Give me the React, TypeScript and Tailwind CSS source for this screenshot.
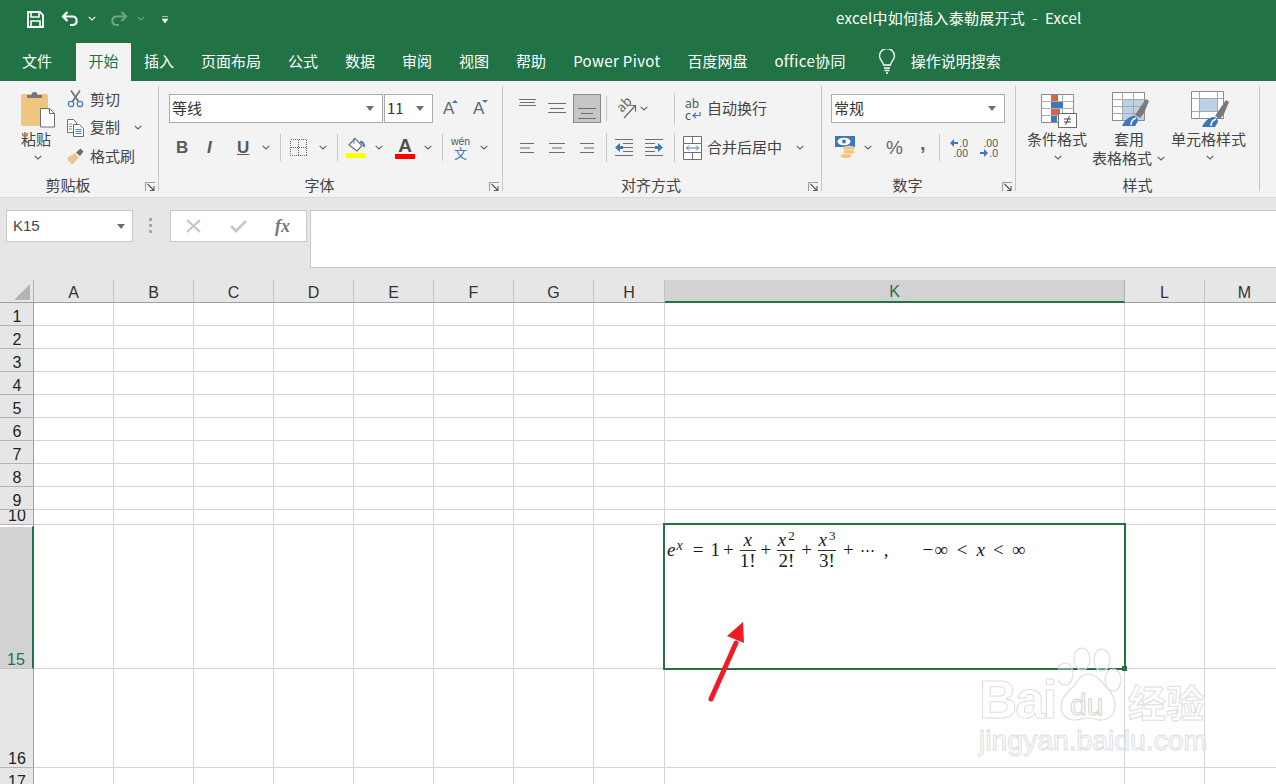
import React from "react";

const columns = [
  { name: "A", width: 80 },
  { name: "B", width: 80 },
  { name: "C", width: 80 },
  { name: "D", width: 80 },
  { name: "E", width: 80 },
  { name: "F", width: 80 },
  { name: "G", width: 80 },
  { name: "H", width: 71 },
  { name: "K", width: 460 },
  { name: "L", width: 80 },
  { name: "M", width: 80 },
];

const rows = [
  { name: "1", height: 23 },
  { name: "2", height: 23 },
  { name: "3", height: 23 },
  { name: "4", height: 23 },
  { name: "5", height: 23 },
  { name: "6", height: 23 },
  { name: "7", height: 23 },
  { name: "8", height: 23 },
  { name: "9", height: 23 },
  { name: "10", height: 15 },
  { name: "15", height: 144 },
  { name: "16", height: 99 },
  { name: "17", height: 23 },
];

const tabs = ["插入", "页面布局", "公式", "数据", "审阅", "视图", "帮助", "Power Pivot", "百度网盘", "office协同"];

function Chev({ className = "" }: { className?: string }) {
  return (
    <svg width="8" height="5" viewBox="0 0 8 5" className={`shrink-0 ${className}`}>
      <path d="M.7.8 4 4 7.3.8" fill="none" stroke="#606060" strokeWidth="1.1" />
    </svg>
  );
}

function Caret({ className = "" }: { className?: string }) {
  return (
    <svg width="8" height="5" viewBox="0 0 8 5" className={`shrink-0 ${className}`}>
      <path d="M0 0h8L4 5z" fill="#6e6e6e" />
    </svg>
  );
}

function Sep({ className = "" }: { className?: string }) {
  return <div className={`w-px shrink-0 self-stretch bg-[#c8c8c8] ${className}`} />;
}

function Launcher() {
  return (
    <svg width="10" height="9" viewBox="0 0 10 9" className="absolute right-[3px] bottom-[0px]">
      <path d="M.5 9V.5H10" fill="none" stroke="#9a9a9a" />
      <path d="M2.500 2l6 6M9 4v4.500H5" fill="none" stroke="#555" strokeWidth="1.1" />
    </svg>
  );
}

function Group({ width, label, children, launcher = true }: { width: string; label: string; children: React.ReactNode; launcher?: boolean }) {
  return (
    <section className={`${width} flex h-[105px] shrink-0 flex-col border-r border-[#c6c6c6]`}>
      <div className="h-[92px]">{children}</div>
      <div className={`relative h-[13px] text-center text-[15px] leading-[14px] text-[#444] ${launcher ? "pr-[22px]" : ""}`}>
        {label}
        {launcher && <Launcher />}
      </div>
    </section>
  );
}

function Select({ width, label }: { width: string; label: string }) {
  return (
    <div className={`${width} flex h-[29px] shrink-0 items-center justify-between border border-[#ababab] bg-white pl-[2px] pr-[8px] text-[15px] text-[#333]`}>
      <span>{label}</span>
      <Caret />
    </div>
  );
}

// each line is [x1, x2, y]
function Lines({ width, lines }: { width: number; lines: [number, number, number][] }) {
  return (
    <svg width={width} height="16" viewBox={`0 0 ${width} 16`} className="shrink-0">
      {lines.map(([x1, x2, y], i) => (
        <path key={i} d={`M${x1} ${y}H${x2}`} stroke="#6e6e6e" />
      ))}
    </svg>
  );
}

function PasteIcon() {
  return (
    <svg width="35" height="38" viewBox="0 0 35 38">
      <rect x="0" y="4" width="27" height="32" rx="2" fill="#efc67f" />
      <path d="M6 8V5h4.500a3 3 0 0 1 6 0H21v3z" fill="#777" />
      <path d="M19.500 18.500h9l5 5v13.500h-14z" fill="#fff" stroke="#6e6e6e" />
      <path d="M28.500 18.500v5h5" fill="none" stroke="#6e6e6e" />
    </svg>
  );
}

function ScissorsIcon() {
  return (
    <svg width="17" height="18" viewBox="0 0 17 18" className="shrink-0">
      <path d="M5.500 11.500 13 .5M11.500 11.500 4 .5" stroke="#6a6a6a" strokeWidth="1.500" fill="none" />
      <circle cx="4" cy="14" r="2.700" fill="none" stroke="#4a7ebb" strokeWidth="1.300" />
      <circle cx="13" cy="14" r="2.700" fill="none" stroke="#4a7ebb" strokeWidth="1.300" />
    </svg>
  );
}

function CopyIcon() {
  return (
    <svg width="17" height="18" viewBox="0 0 17 18" className="shrink-0">
      <path d="M.5.500h6l3 3v10h-9z" fill="#fff" stroke="#6e6e6e" />
      <path d="M6.500 5.500h6l4 4v8h-10z" fill="#fff" stroke="#6e6e6e" />
      <path d="M2 5h3M2 7.500h3M2 10h3" stroke="#888" />
      <path d="M8.500 10.500h6M8.500 12.500h6M8.500 14.500h6" stroke="#4a7ebb" />
    </svg>
  );
}

function BrushIcon() {
  return (
    <svg width="17" height="16" viewBox="0 0 17 16" className="shrink-0">
      <path d="M0 10 8 5l4 4.500L6 16H3l1-3-2 1z" fill="#e9c78c" />
      <path d="M9 4.500l4.500-4 3 3-3.500 4.500z" fill="#6e6e6e" />
    </svg>
  );
}

function BorderIcon() {
  return (
    <svg width="17" height="17" viewBox="0 0 17 17" className="shrink-0" shapeRendering="crispEdges">
      <path d="M.5.500h16v16H.5zM8.500.5v16M.5 8.500h16" fill="none" stroke="#666" strokeDasharray="1 1" />
    </svg>
  );
}

function FillIcon() {
  return (
    <div className="flex w-[20px] shrink-0 flex-col items-center">
      <svg width="20" height="16" viewBox="0 0 20 16">
        <path d="M3 8 9 1.500l7 7-5 5.500z" fill="#fff" stroke="#6e6e6e" strokeWidth="1.200" />
        <path d="M8 1v6" stroke="#6e6e6e" />
        <path d="M14.500 3.500c3 .5 4.500 3 4.500 5.500 0 1.500-2 1.500-2 0 0-2-1-3-3-3z" fill="#3f78b8" />
      </svg>
      <div className="h-[5px] w-[20px] bg-[#ffff00]" />
    </div>
  );
}

function OrientationIcon() {
  return (
    <div className="relative h-[24px] w-[22px] shrink-0">
      <span className="absolute left-[1px] top-[-1px] rotate-[-45deg] text-[13px] leading-[16px] text-[#666]">ab</span>
      <svg width="22" height="24" viewBox="0 0 22 24" className="absolute left-0 top-0">
        <path d="M9 21 20 9M14.500 8.500H20.500V14.500" fill="none" stroke="#666" strokeWidth="1.200" />
      </svg>
    </div>
  );
}

function WrapIcon() {
  return (
    <div className="relative h-[24px] w-[15px] shrink-0 text-[12px] leading-[12px] text-[#555]">
      <div>ab</div>
      <div>c</div>
      <svg width="9" height="9" viewBox="0 0 9 9" className="absolute bottom-[1px] right-[-1px]">
        <path d="M8 1v3.500H1.500M4 2 1 4.500 4 7" fill="none" stroke="#3f78b8" strokeWidth="1.200" />
      </svg>
    </div>
  );
}

function IndentIcon({ flip }: { flip?: boolean }) {
  return (
    <svg width="18" height="17" viewBox="0 0 18 17" className={`shrink-0 ${flip ? "-scale-x-100" : ""}`}>
      <path d="M0 .5h18M8 4.500h10M8 8.500h10M8 12.500h10M0 16.500h18" stroke="#6e6e6e" />
      <path d="M0 8.500 5 4v3h3v3H5v3z" fill="#3f78b8" />
    </svg>
  );
}

function MergeIcon() {
  return (
    <svg width="19" height="24" viewBox="0 0 19 24" className="shrink-0">
      <path d="M.5.500h18v23H.5zM.5 7.500h18M.5 16.500h18M9.500.5v7M9.500 16.500v7" fill="#fff" stroke="#6e6e6e" />
      <path d="M3.500 12h12M6 9.500 3.500 12 6 14.500M13 9.500l2.500 2.500-2.500 2.500" fill="none" stroke="#3f78b8" />
    </svg>
  );
}

function CurrencyIcon() {
  return (
    <svg width="20" height="24" viewBox="0 0 20 24" className="shrink-0">
      <rect x="0" y="0" width="20" height="11" fill="#3f78b8" />
      <ellipse cx="9" cy="5.500" rx="6.500" ry="3.800" fill="#fff" />
      <circle cx="9" cy="5.500" r="2" fill="#3f78b8" />
      <ellipse cx="14" cy="12.500" rx="6" ry="2.400" fill="#efc67f" stroke="#fff" strokeWidth=".5" />
      <ellipse cx="14" cy="16" rx="6" ry="2.400" fill="#efc67f" stroke="#fff" strokeWidth=".5" />
      <ellipse cx="11" cy="20" rx="6" ry="2.400" fill="#efc67f" stroke="#fff" strokeWidth=".5" />
    </svg>
  );
}

function DecimalIcon({ more }: { more?: boolean }) {
  const arrow = (
    <svg width="8" height="8" viewBox="0 0 8 8" className={more ? "" : "-scale-x-100"}>
      <path d="M0 3h4V0l4 4-4 4V5H0z" fill="#3f78b8" />
    </svg>
  );
  return (
    <div className="flex w-[18px] shrink-0 flex-col items-end font-['Liberation_Sans',sans-serif] text-[10.500px] leading-[10px] text-[#555]">
      {more ? (
        <>
          <span>.00</span>
          <span className="flex items-center gap-[1px]">{arrow}.0</span>
        </>
      ) : (
        <>
          <span className="flex items-center gap-[1px]">{arrow}.0</span>
          <span>.00</span>
        </>
      )}
    </div>
  );
}

function CondFormatIcon() {
  return (
    <svg width="38" height="36" viewBox="0 0 38 36" className="mt-[4px]">
      <path d="M1.500.5h32v28h-32z" fill="#fff" stroke="#8a8a8a" />
      <path d="M1.500 7.500h32M1.500 14.500h32M1.500 21.500h32M11.500.5v28M22.500.5v28" stroke="#b0b0b0" />
      <rect x="11" y="1" width="7" height="6" fill="#d9624a" />
      <rect x="11" y="8" width="12" height="6" fill="#3f78b8" />
      <rect x="11" y="15" width="9" height="6" fill="#d9624a" />
      <rect x="11" y="22" width="6" height="6" fill="#3f78b8" />
      <rect x="18.500" y="19.500" width="18" height="14" fill="#fff" stroke="#6e6e6e" />
      <path d="M24 25h7M24 28h7M29.500 22l-4 9" stroke="#444" fill="none" />
    </svg>
  );
}

function TableIcon() {
  return (
    <svg width="38" height="36" viewBox="0 0 38 36" className="mt-[1px]">
      <path d="M.5 1.500h32v28H.5z" fill="#fff" stroke="#8a8a8a" />
      <rect x="10" y="8" width="22" height="21" fill="#bdd0e6" />
      <path d="M.5 8.500h32M.5 15.500h32M.5 22.500h32M10.500 1.500v28M21.500 1.500v28" stroke="#a8a8a8" />
      <path d="M23 24 27 18 34 8l3 2-5 12-4 5z" fill="#7a7a7a" />
      <path d="M10 35c2-5 6-9 11-10 3 0 5 2 5 5l-3 5z" fill="#3f78b8" />
      <path d="M19 34c0-3 2-6 5-7" fill="none" stroke="#fff" strokeWidth="1.500" />
    </svg>
  );
}

function CellStyleIcon() {
  return (
    <svg width="38" height="38" viewBox="0 0 38 38">
      <path d="M.5 1.500h32v27H.5z" fill="#fff" stroke="#8a8a8a" />
      <rect x="8" y="8" width="18" height="13" fill="#bdd0e6" />
      <path d="M.5 8.500h32M.5 21.500h32M8.500 1.500v27M26.500 1.500v27" stroke="#a8a8a8" />
      <path d="M24 26 28 20 35 10l3 2-5 12-4 5z" fill="#7a7a7a" />
      <path d="M11 37c2-5 6-9 11-10 3 0 5 2 5 5l-3 5z" fill="#3f78b8" />
      <path d="M20 36c0-3 2-6 5-7" fill="none" stroke="#fff" strokeWidth="1.500" />
    </svg>
  );
}

function Frac({ top, bottom, className }: { top: React.ReactNode; bottom: string; className: string }) {
  return (
    <div className={`flex shrink-0 flex-col items-center ${className}`}>
      <div className="h-[20px] whitespace-nowrap">{top}</div>
      <div className="h-[20px] w-full border-t border-[#333] text-center">{bottom}</div>
    </div>
  );
}

function Formula() {
  return (
    <div className="mt-[5px] flex h-[40px] items-center pl-[2px] font-['Liberation_Serif','DejaVu_Serif',serif] text-[19px] leading-[20px] text-[#1a1a1a]">
      <i>e</i>
      <i className="ml-[1px] mb-[8px] text-[14px]">x</i>
      <span className="ml-[10px]">=</span>
      <span className="ml-[7px]">1</span>
      <span className="ml-[3px]">+</span>
      <Frac top={<i>x</i>} bottom="1!" className="ml-[6px] w-[16px]" />
      <span className="ml-[5px]">+</span>
      <Frac top={<><i>x</i><sup className="ml-[2px] text-[13px] leading-[0]">2</sup></>} bottom="2!" className="ml-[6px] w-[18px]" />
      <span className="ml-[6px]">+</span>
      <Frac top={<><i>x</i><sup className="ml-[2px] text-[13px] leading-[0]">3</sup></>} bottom="3!" className="ml-[6px] w-[18px]" />
      <span className="ml-[7px]">+</span>
      <span className="ml-[6px] text-[15px]">⋯</span>
      <span className="ml-[9px]">,</span>
      <span className="ml-[34px]">−</span>
      <span className="ml-[1px]">∞</span>
      <span className="ml-[9px]">&lt;</span>
      <i className="ml-[9px]">x</i>
      <span className="ml-[8px]">&lt;</span>
      <span className="ml-[8px]">∞</span>
    </div>
  );
}

function Watermark() {
  const outline = "text-white/50 [-webkit-text-stroke:1px_#dedede]";
  return (
    <div className="pointer-events-none absolute left-[979px] top-[365px] w-[232px] font-['Liberation_Sans',sans-serif]">
      <div className="flex h-[78px] items-end">
        <span className={`w-[79px] text-[53px] font-bold leading-[46px] tracking-[-2px] ${outline}`}>Bai</span>
        <div className="relative h-[78px] w-[64px] shrink-0">
          <svg width="64" height="78" viewBox="0 0 64 78" className="absolute left-0 top-0">
            <g fill="#ffffff" fillOpacity=".35" stroke="#dedede" strokeWidth="1.200">
              <ellipse cx="7" cy="29" rx="8" ry="11" />
              <ellipse cx="24" cy="14" rx="8" ry="11" />
              <ellipse cx="44" cy="15" rx="8" ry="11" />
              <ellipse cx="55" cy="35" rx="8" ry="11" />
              <path d="M30 29c8 0 12 6 17 12 6 6 11 12 10 21-1 10-9 14-16 13-5-1-8-2-12-2s-7 2-12 2c-8 0-14-5-14-13 0-8 5-14 11-19 5-5 8-14 16-14z" />
            </g>
          </svg>
          <span className="absolute left-[12px] top-[45px] text-[30px] leading-[30px] text-white/50 [-webkit-text-stroke:1px_#d2d2d2]">du</span>
        </div>
        <span className={`ml-[6px] whitespace-nowrap font-['Noto_Sans_CJK_SC',sans-serif] text-[38px] font-bold leading-[44px] ${outline}`}>经验</span>
      </div>
      <div className={`text-[28.300px] leading-[34px] ${outline}`}>jingyan.baidu.com</div>
    </div>
  );
}

function Sheet() {
  return (
    <div className="relative flex-1 overflow-hidden bg-white font-['Liberation_Sans',sans-serif] text-[16px] text-[#333]">
      <div className="flex h-[23px] border-b border-[#a0a0a0] bg-[#e6e6e6]">
        <div className="flex w-[34px] shrink-0 items-end justify-end border-r border-[#b0b0b0] pb-[2px] pr-[3px]">
          <svg width="16" height="16" viewBox="0 0 16 16">
            <path d="M16 0v16H0z" fill="#b4b4b4" />
          </svg>
        </div>
        {columns.map((col) => (
          <div
            key={col.name}
            style={{ width: col.width }}
            className={`flex shrink-0 items-center justify-center border-r pt-[3px] ${
              col.name === "K"
                ? "-mb-px border-b-2 border-b-[#217346] border-r-[#b0b0b0] bg-[#d2d2d2] text-[#217346]"
                : "border-[#c4c4c4]"
            }`}
          >
            {col.name}
          </div>
        ))}
      </div>
      {rows.map((row) => (
        <div key={row.name} className="flex" style={{ height: row.height }}>
          <div
            className={`flex w-[34px] shrink-0 items-end justify-center overflow-hidden border-b leading-[16px] ${
              row.name === "15"
                ? "border-b-[#c4c4c4] border-r-2 border-r-[#217346] border-t-2 border-t-white bg-[#d2d2d2] text-[#217346]"
                : "border-r border-r-[#a0a0a0] border-b-[#b4b4b4] bg-[#e6e6e6] pl-[1px] text-[#222]"
            }`}
          >
            {row.name}
          </div>
          {columns.map((col) => (
            <div key={col.name} style={{ width: col.width }} className="shrink-0 border-b border-r border-[#d4d4d4]">
              {row.name === "15" && col.name === "K" && <Formula />}
            </div>
          ))}
        </div>
      ))}

      {/* selected cell */}
      <div className="absolute left-[663px] top-[243px] h-[147px] w-[463px] border-2 border-[#217346]" />
      <div className="absolute left-[1122px] top-[386px] h-[5px] w-[5px] bg-[#217346]" />

      {/* annotation arrow */}
      <svg width="50" height="90" viewBox="0 0 50 90" className="absolute left-[700px] top-[338px]">
        <path d="M11 81 L36 25" stroke="#ee1c25" strokeWidth="5" strokeLinecap="round" fill="none" />
        <path d="M43 4 27 18l17 7z" fill="#ee1c25" />
      </svg>

      <Watermark />
    </div>
  );
}

export default function App() {
  return (
    <div className="flex h-[784px] w-[1276px] flex-col overflow-hidden bg-[#e6e6e6] font-['Noto_Sans_CJK_SC','Liberation_Sans',sans-serif]">
      {/* title bar */}
      <div className="flex h-[41px] shrink-0 items-center bg-[#217346] text-white">
        <svg width="17" height="17" viewBox="0 0 17 17" className="ml-[27px] mt-[-3px]">
          <path d="M1 1h12l3 3v12H1z" fill="none" stroke="#fff" strokeWidth="1.800" />
          <path d="M4 1v5h8V1M4 16v-6h9v6" fill="none" stroke="#fff" strokeWidth="1.600" />
        </svg>
        <svg width="19" height="15" viewBox="0 0 19 15" className="ml-[17px] mt-[-4px]">
          <path d="M6.500 1 2 5.500l4.500 4.500M2 5.500h10a4.300 4.300 0 0 1 0 8.500H9" fill="none" stroke="#fff" strokeWidth="2.200" />
        </svg>
        <Chev className="ml-[8px] mt-[-4px] [&_path]:stroke-white" />
        <svg width="19" height="15" viewBox="0 0 19 15" className="ml-[13px] mt-[-4px] opacity-35">
          <path d="M12.500 1 17 5.500 12.500 10M17 5.500H7a4.300 4.300 0 0 0 0 8.500h3" fill="none" stroke="#fff" strokeWidth="2.200" />
        </svg>
        <Chev className="ml-[9px] mt-[-4px] opacity-35 [&_path]:stroke-white" />
        <svg width="6" height="7" viewBox="0 0 6 7" className="ml-[17px] mt-[-2px]">
          <path d="M0 .5h6M0 3h6L3 7z" fill="#fff" stroke="#fff" strokeWidth=".6" />
        </svg>
        <div className="ml-[668px] mt-[-5px] whitespace-pre text-[15px] tracking-[0.25px]">excel中如何插入泰勒展开式  -  Excel</div>
      </div>

      {/* tabs */}
      <div className="flex h-[40px] shrink-0 items-end bg-[#217346] text-[15px] text-white">
        <div className="ml-[22px] h-[38px] leading-[35px]">文件</div>
        <div className="ml-[24px] h-[38px] w-[55px] bg-[#f3f3f3] text-center leading-[35px] text-[#217346]">开始</div>
        <div className="ml-[13px] flex gap-[27px]">
          {tabs.map((tab) => (
            <div key={tab} className={`h-[38px] whitespace-nowrap leading-[35px] ${/^[Po]/.test(tab) ? "tracking-[0.35px]" : ""}`}>{tab}</div>
          ))}
        </div>
        <svg width="18" height="25" viewBox="0 0 18 25" className="mb-[7px] ml-[32px]">
          <path d="M5.500 16c0-3-4-5-4-9a7.500 7.500 0 0 1 15 0c0 4-4 6-4 9z" fill="none" stroke="#fff" strokeWidth="1.300" />
          <path d="M6 19h6M6.500 21.500h5M8 24h2" stroke="#fff" strokeWidth="1.300" />
        </svg>
        <div className="ml-[15px] h-[38px] leading-[35px]">操作说明搜索</div>
      </div>

      {/* ribbon */}
      <div className="flex h-[117px] shrink-0 border-b border-[#d8d8d8] bg-[#f3f3f3] pt-[5px] text-[15px] text-[#444]">
        <Group width="w-[159px]" label="剪贴板">
          <div className="flex pt-[4px]">
            <div className="ml-[21px] flex w-[35px] flex-col">
              <PasteIcon />
              <div className="mt-[2px] leading-[18px]">粘贴</div>
              <Chev className="ml-[13px] mt-[7px]" />
            </div>
            <div className="ml-[11px] flex flex-col gap-[10.500px]">
              <div className="flex h-[18px] items-center">
                <ScissorsIcon />
                <span className="ml-[6px]">剪切</span>
              </div>
              <div className="flex h-[18px] items-center">
                <CopyIcon />
                <span className="ml-[6px]">复制</span>
                <Chev className="ml-[14px]" />
              </div>
              <div className="flex h-[18px] items-center">
                <BrushIcon />
                <span className="ml-[6px]">格式刷</span>
              </div>
            </div>
          </div>
        </Group>

        <Group width="w-[344px]" label="字体">
          <div className="flex items-center pt-[8px]">
            <Select width="ml-[10px] w-[214px]" label="等线" />
            <Select width="ml-[1px] w-[49px]" label="11" />
            <div className="ml-[10px] flex w-[16px] font-['Liberation_Sans',sans-serif] text-[17px] leading-[20px] text-[#666]">
              A
              <svg width="6" height="3" viewBox="0 0 6 3" className="-ml-[2px] mt-[1px]">
                <path d="M0 3h6L3 0z" fill="#3f78b8" />
              </svg>
            </div>
            <div className="ml-[14px] flex w-[16px] font-['Liberation_Sans',sans-serif] text-[17px] leading-[20px] text-[#666]">
              A
              <svg width="6" height="3" viewBox="0 0 6 3" className="-ml-[2px] mt-[1px]">
                <path d="M0 0h6L3 3z" fill="#3f78b8" />
              </svg>
            </div>
          </div>
          <div className="mt-[11px] flex h-[27px] items-center font-['Liberation_Sans',sans-serif] text-[17px] font-bold text-[#5a5a5a]">
            <span className="ml-[17px] w-[10px]">B</span>
            <span className="ml-[21px] w-[10px] italic">I</span>
            <span className="ml-[20px] w-[10px] underline">U</span>
            <Chev className="ml-[15px]" />
            <Sep className="ml-[10px]" />
            <div className="ml-[9px]"><BorderIcon /></div>
            <Chev className="ml-[12px]" />
            <Sep className="ml-[10px]" />
            <div className="ml-[8px]"><FillIcon /></div>
            <Chev className="ml-[9px]" />
            <div className="ml-[12px] flex w-[20px] shrink-0 flex-col items-center text-[19px] leading-[17px] text-[#505050]">
              A
              <div className="h-[5px] w-[20px] bg-[#ff0000]" />
            </div>
            <Chev className="ml-[9px]" />
            <Sep className="ml-[10px]" />
            <div className="ml-[9px] flex w-[17px] shrink-0 flex-col items-center text-[10.500px] font-normal leading-[11px] text-[#555]">
              wén
              <span className="font-['Noto_Sans_CJK_SC',sans-serif] text-[13px] leading-[12px] text-[#3f78b8]">文</span>
            </div>
            <Chev className="ml-[11px]" />
          </div>
        </Group>

        <Group width="w-[319px]" label="对齐方式">
          <div className="flex h-[37px] items-center pt-[8px]">
            <div className="ml-[14px] -mt-[10px]"><Lines width={20} lines={[[2, 19, 3.5], [3, 18, 6.5], [2, 19, 9.5]]} /></div>
            <div className="ml-[10px]"><Lines width={20} lines={[[1, 19, 2.5], [3, 17, 7.5], [1, 19, 11.5]]} /></div>
            <div className="ml-[6px] flex h-[29px] w-[28px] shrink-0 items-center justify-center border border-[#8a8a8a] bg-[#c6c6c6]">
              <div className="mt-[6px]"><Lines width={20} lines={[[1, 19, 4.5], [4, 16, 9.5], [1, 19, 14.5]]} /></div>
            </div>
            <Sep className="ml-[5px] my-[2px]" />
            <div className="ml-[8px]"><OrientationIcon /></div>
            <Chev className="ml-[3px]" />
            <Sep className="-mt-[1px] ml-[26px] -mb-[2px]" />
            <div className="ml-[10px]"><WrapIcon /></div>
            <span className="ml-[7px] whitespace-nowrap">自动换行</span>
          </div>
          <div className="mt-[10px] flex h-[29px] items-center">
            <div className="ml-[16px]"><Lines width={16} lines={[[1, 15, 3.5], [1, 11, 8], [1, 15, 12.5]]} /></div>
            <div className="ml-[14px]"><Lines width={16} lines={[[0, 16, 3.5], [3, 13, 8], [0, 16, 12.5]]} /></div>
            <div className="ml-[14px]"><Lines width={16} lines={[[1, 15, 3.5], [5, 15, 8], [1, 15, 12.5]]} /></div>
            <Sep className="ml-[11px]" />
            <div className="ml-[8px]"><IndentIcon /></div>
            <div className="ml-[12px]"><IndentIcon flip /></div>
            <Sep className="ml-[11px]" />
            <div className="ml-[8px]"><MergeIcon /></div>
            <span className="ml-[5px] whitespace-nowrap">合并后居中</span>
            <Chev className="ml-[14px]" />
          </div>
        </Group>

        <Group width="w-[194px]" label="数字">
          <div className="flex pt-[8px]">
            <Select width="ml-[9px] w-[174px]" label="常规" />
          </div>
          <div className="mt-[11px] flex h-[27px] items-center">
            <div className="ml-[13px]"><CurrencyIcon /></div>
            <Chev className="ml-[9px]" />
            <span className="ml-[14px] w-[16px] font-['Liberation_Sans',sans-serif] text-[19px] leading-[20px] text-[#666]">%</span>
            <span className="-mt-[10px] ml-[18px] w-[7px] font-['Liberation_Sans',sans-serif] text-[20px] font-bold leading-[20px] text-[#666]">,</span>
            <Sep className="ml-[12px]" />
            <div className="ml-[10px]"><DecimalIcon /></div>
            <div className="ml-[12px]"><DecimalIcon more /></div>
          </div>
        </Group>

        <Group width="w-[244px]" label="样式" launcher={false}>
          <div className="flex pt-[4px]">
            <div className="ml-[11px] flex w-[60px] flex-col items-center">
              <div className="h-[40px] pl-[4px]"><CondFormatIcon /></div>
              <div className="leading-[18px] whitespace-nowrap">条件格式</div>
              <Chev className="ml-[2px] mt-[7px]" />
            </div>
            <div className="ml-[5px] flex w-[74px] flex-col items-start">
              <div className="ml-[20px] h-[40px]"><TableIcon /></div>
              <div className="ml-[22px] leading-[18px]">套用</div>
              <div className="flex items-center whitespace-nowrap leading-[20px]">
                表格格式<Chev className="ml-[5px]" />
              </div>
            </div>
            <div className="ml-[5px] flex w-[75px] flex-col items-center">
              <div className="h-[40px] pl-[2px]"><CellStyleIcon /></div>
              <div className="leading-[18px] whitespace-nowrap">单元格样式</div>
              <Chev className="ml-[3px] mt-[7px]" />
            </div>
          </div>
        </Group>
      </div>

      {/* formula bar */}
      <div className="flex h-[82px] shrink-0 items-start bg-[#e6e6e6] pl-[6px] pt-[12px]">
        <div className="flex h-[32px] w-[127px] items-center justify-between border border-[#c8c8c8] bg-white pl-[6px] pr-[7px] font-['Liberation_Sans',sans-serif] text-[15px] text-[#444]">
          K15
          <Caret />
        </div>
        <div className="ml-[16px] mt-[8px] flex flex-col gap-[3px]">
          <div className="h-[3px] w-[3px] bg-[#a8a8a8]" />
          <div className="h-[3px] w-[3px] bg-[#a8a8a8]" />
          <div className="h-[3px] w-[3px] bg-[#a8a8a8]" />
        </div>
        <div className="ml-[18px] flex h-[32px] w-[137px] items-center border border-[#c8c8c8] bg-white">
          <svg width="15" height="14" viewBox="0 0 15 14" className="ml-[15px]">
            <path d="M1 1l13 12M14 1 1 13" stroke="#c4c4c4" strokeWidth="2" />
          </svg>
          <svg width="17" height="14" viewBox="0 0 17 14" className="ml-[29px]">
            <path d="M1 7l5 5L16 2" fill="none" stroke="#c8c8c8" strokeWidth="2.800" />
          </svg>
          <span className="ml-[28px] font-['Liberation_Serif',serif] text-[18px] font-bold italic leading-[20px] text-[#777]">fx</span>
        </div>
        <div className="ml-[3px] h-[58px] flex-1 border-y border-l border-[#c8c8c8] bg-white" />
      </div>

      <Sheet />
    </div>
  );
}
